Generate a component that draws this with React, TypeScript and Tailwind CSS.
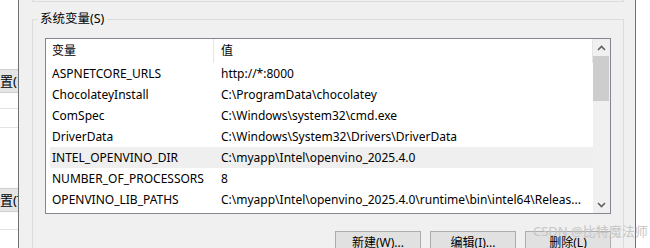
const font = { fontFamily: "'Noto Sans', 'Noto Sans CJK SC', sans-serif" };

const rows: [string, string][] = [
  ["ASPNETCORE_URLS", "http://*:8000"],
  ["ChocolateyInstall", "C:\\ProgramData\\chocolatey"],
  ["ComSpec", "C:\\Windows\\system32\\cmd.exe"],
  ["DriverData", "C:\\Windows\\System32\\Drivers\\DriverData"],
  ["INTEL_OPENVINO_DIR", "C:\\myapp\\Intel\\openvino_2025.4.0"],
  ["NUMBER_OF_PROCESSORS", "8"],
  ["OPENVINO_LIB_PATHS", "C:\\myapp\\Intel\\openvino_2025.4.0\\runtime\\bin\\intel64\\Releas..."],
];

function Chevron({ up }: { up?: boolean }) {
  return (
    <svg width="9" height="6" viewBox="0 0 9 6">
      <path
        d={up ? "M1 5 L4.5 1.5 L8 5" : "M1 1 L4.5 4.5 L8 1"}
        fill="none"
        stroke="#606060"
        strokeWidth="1.6"
      />
    </svg>
  );
}

export default function App() {
  return (
    <div
      className="relative w-[650px] h-[248px] overflow-hidden flex bg-white text-[12px] text-black"
      style={font}
    >
      {/* strip of the dialog behind */}
      <div className="w-[18px] flex flex-col overflow-hidden bg-white shrink-0 text-[13px]">
        <div className="h-[69px] shrink-0" />
        <div className="h-[24px] shrink-0 bg-[#e5e5e5] border-y border-[#cfcfcf] flex items-center whitespace-nowrap leading-none">
          置(E)
        </div>
        <div className="h-[15px] shrink-0" />
        <div className="h-px shrink-0 bg-[#e3e3e3]" />
        <div className="h-[18px] shrink-0" />
        <div className="h-px shrink-0 bg-[#e3e3e3]" />
        <div className="h-[60px] shrink-0" />
        <div className="h-[24px] shrink-0 bg-[#e5e5e5] border-y border-[#cfcfcf] flex items-center whitespace-nowrap leading-none">
          置(T)
        </div>
        <div className="h-[17px] shrink-0" />
        <div className="h-px shrink-0 bg-[#e3e3e3]" />
      </div>
      <div className="w-px shrink-0 bg-[#707070]" />

      {/* dialog */}
      <div className="w-[616px] shrink-0 bg-[#f0f0f0] flex flex-col pl-[13px]">
        <div className="w-[592px] h-[2px] shrink-0 border-x border-b border-[#dcdcdc]" />
        <fieldset className="mt-[8px] w-[592px] border border-[#dcdcdc] p-0">
          <legend className="ml-[4px] px-[3px] leading-[18px] text-[12.5px]">系统变量(S)</legend>

          <div className="px-[12px] pt-[10px] pb-4">
            <div className="h-[176px] border border-[#828790] bg-white flex">
              <div className="flex-1 flex flex-col">
                <div className="h-[24px] flex shrink-0">
                  <div className="w-[168px] pl-[6px] border-r border-[#e5e5e5] flex items-center">变量</div>
                  <div className="flex-1 pl-[7px] border-r border-[#e5e5e5] flex items-center">值</div>
                </div>
                {rows.map(([k, v]) => (
                  <div
                    key={k}
                    className={
                      "h-[21px] ml-[4px] pl-[2px] flex items-center whitespace-nowrap shrink-0 " +
                      (k === "INTEL_OPENVINO_DIR" ? "bg-[#efefef]" : "")
                    }
                  >
                    <div className="w-[162px] overflow-hidden">{k}</div>
                    <div className="flex-1 pl-[7px] overflow-hidden">{v}</div>
                  </div>
                ))}
              </div>
              <div className="w-[17px] bg-[#f0f0f0] flex flex-col">
                <div className="h-[17px] flex items-center justify-center">
                  <Chevron up />
                </div>
                <div className="h-[45px] w-[16px] bg-[#cdcdcd]" />
                <div className="flex-1" />
                <div className="h-[17px] flex items-center justify-center">
                  <Chevron />
                </div>
              </div>
            </div>

            <div className="mt-[17px] flex justify-end gap-[9px]">
              {["新建(W)...", "编辑(I)...", "删除(L)"].map((b) => (
                <button
                  key={b}
                  className="w-[86px] h-[24px] border border-[#adadad] bg-[#e1e1e1] flex items-center justify-center"
                >
                  {b}
                </button>
              ))}
            </div>
          </div>
        </fieldset>
      </div>
      <div className="w-px shrink-0 bg-[#707070]" />
      <div className="flex-1 bg-white" />

      <div className="absolute left-[533px] top-[221px] text-[13px] leading-[20px] text-[#c6c6c6] whitespace-nowrap">
        CSDN @比特魔法师
      </div>
    </div>
  );
}
